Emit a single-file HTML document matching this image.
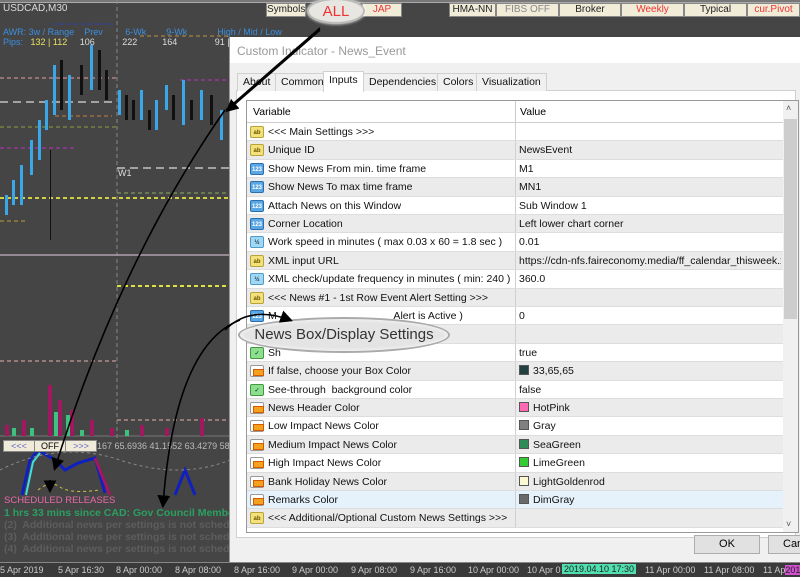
<!DOCTYPE html>
<html><head><meta charset="utf-8"><style>
*{margin:0;padding:0;box-sizing:border-box}
body{width:800px;height:577px;overflow:hidden;background:#454545;font-family:"Liberation Sans",sans-serif;position:relative}
.abs{position:absolute}
.tb{position:absolute;top:3px;height:14px;background:#f0ecd8;border:1px solid #888;font-size:10px;line-height:12px;text-align:center;color:#222}
.dlg{position:absolute;left:229px;top:37px;width:571px;height:525px;background:#f0f0f0;border-left:1px solid #999}
.row{position:absolute;left:0;width:536px;height:18.4px;font-size:10.5px;line-height:18px;color:#111;border-bottom:1px solid #ddd}
.row .n{position:absolute;left:21px;white-space:nowrap}
.row .v{position:absolute;left:272px;white-space:nowrap;overflow:hidden;width:262px}
.row .sep{position:absolute;left:268px;top:0;bottom:0;border-left:1px solid #d0d0d0}
.ic{position:absolute;left:3px;top:3px;width:14px;height:12px;border-radius:2px;font-size:6px;line-height:12px;text-align:center;font-weight:bold}
.ab{background:#f3e27a;border:1px solid #b9a23a;color:#6a5300}
.n1{background:#5aa7e3;border:1px solid #2c6fae;color:#fff}
.hf{background:#9fd8f3;border:1px solid #4f9cc8;color:#235}
.bo{background:#8fdd8f;border:1px solid #3d9a3d;color:#063}
.co{background:#fff;border:1px solid #999}
.co:after{content:"";position:absolute;left:2px;top:3px;width:9px;height:5px;background:#f4a21d;border:1px solid #d25b00}
.sw{display:inline-block;width:10px;height:10px;vertical-align:-1px;margin-right:4px;border:1px solid #555}
.tab{position:absolute;top:36px;height:18px;font-size:10.5px;line-height:17px;padding:0 5px;border:1px solid #d0d0d0;border-bottom:none;background:#f0f0f0;color:#111}
.ax{position:absolute;top:565px;font-size:9px;color:#ccc;white-space:nowrap}
.gt{position:absolute;left:4px;font-size:10.5px;font-weight:bold;white-space:nowrap}
</style></head><body>
<!-- top strip -->
<div class="abs" style="left:0;top:0;width:800px;height:3px;background:#777"></div>
<div class="abs" style="left:0;top:2px;width:800px;height:1px;background:#aaa"></div>
<div class="tb" style="left:266px;width:40px">Symbols</div>
<div class="tb" style="left:362px;width:40px;color:#e33">JAP</div>
<div class="tb" style="left:449px;width:47px">HMA-NN</div>
<div class="tb" style="left:496px;width:63px;color:#888">FIBS OFF</div>
<div class="tb" style="left:559px;width:62px">Broker</div>
<div class="tb" style="left:621px;width:63px;color:#e33">Weekly</div>
<div class="tb" style="left:684px;width:63px">Typical</div>
<div class="tb" style="left:747px;width:53px;color:#e33">cur.Pivot</div>
<div class="abs" style="left:307px;top:-2px;width:58px;height:26px;border-radius:50%;background:#e8e6e0;border:2px solid #bbb;box-shadow:0 0 3px #fff;color:#e33;font-size:15px;line-height:24px;text-align:center">ALL</div>

<div class="abs" style="left:3px;top:3px;font-size:10px;color:#ddd">USDCAD,M30</div>
<div class="abs" style="left:3px;top:27px;font-size:9px;color:#3b8fe0;white-space:nowrap">AWR: 3w / Range&nbsp;&nbsp;&nbsp;&nbsp;Prev&nbsp;&nbsp;&nbsp;&nbsp;&nbsp;&nbsp;&nbsp;&nbsp;&nbsp;6-Wk&nbsp;&nbsp;&nbsp;&nbsp;&nbsp;&nbsp;&nbsp;&nbsp;9-Wk&nbsp;&nbsp;&nbsp;&nbsp;&nbsp;&nbsp;&nbsp;&nbsp;&nbsp;&nbsp;&nbsp;&nbsp;High / Mid / Low</div>
<div class="abs" style="left:3px;top:37px;font-size:9px;color:#3b8fe0;white-space:nowrap">Pips:&nbsp;&nbsp;&nbsp;<span style="color:#e8e060">132 | 112</span>&nbsp;&nbsp;&nbsp;&nbsp;&nbsp;<span style="color:#ddd">106&nbsp;&nbsp;&nbsp;&nbsp;&nbsp;&nbsp;&nbsp;&nbsp;&nbsp;&nbsp;&nbsp;222&nbsp;&nbsp;&nbsp;&nbsp;&nbsp;&nbsp;&nbsp;&nbsp;&nbsp;&nbsp;164&nbsp;&nbsp;&nbsp;&nbsp;&nbsp;&nbsp;&nbsp;&nbsp;&nbsp;&nbsp;&nbsp;&nbsp;&nbsp;&nbsp;&nbsp;91 |</span></div>

<svg class="abs" style="left:0;top:0" width="230" height="577">
<g stroke-dasharray="4 3" stroke-width="1" fill="none">
<line x1="53" y1="24" x2="113" y2="24" stroke="#3040c0"/>
<line x1="0" y1="78" x2="117" y2="78" stroke="#e8a0a0"/>
<line x1="140" y1="36" x2="230" y2="36" stroke="#c09040"/>
<line x1="180" y1="80" x2="230" y2="80" stroke="#c030c0"/>
<line x1="0" y1="148" x2="75" y2="148" stroke="#c030c0"/>
<line x1="0" y1="127" x2="117" y2="127" stroke="#90a040"/>
<line x1="55" y1="116" x2="112" y2="116" stroke="#c08040"/>
<line x1="0" y1="198" x2="230" y2="198" stroke="#d0d040" stroke-width="2"/>
<line x1="0" y1="221" x2="25" y2="221" stroke="#c0a040"/>
<line x1="117" y1="193" x2="230" y2="193" stroke="#90b060"/>
<line x1="117" y1="286" x2="230" y2="286" stroke="#e0e040" stroke-width="2"/>
<line x1="0" y1="361" x2="117" y2="361" stroke="#e8b0b0"/>
<line x1="117" y1="420" x2="230" y2="420" stroke="#e8b0b0"/>
<line x1="117" y1="0" x2="117" y2="440" stroke="#888"/>
<line x1="117" y1="168" x2="230" y2="168" stroke="#fff" stroke-dasharray="8 5"/>
<line x1="0" y1="102" x2="117" y2="102" stroke="#fff" stroke-dasharray="8 5"/>
</g>
<line x1="0" y1="255" x2="230" y2="255" stroke="#b0a0b0" stroke-width="1.5"/>
<g fill="#3aa8e8">
<rect x="5" y="195" width="3" height="20"/><rect x="12" y="180" width="3" height="25"/><rect x="20" y="165" width="3" height="40"/><rect x="30" y="140" width="3" height="35"/><rect x="38" y="120" width="3" height="40"/><rect x="45" y="100" width="3" height="30"/><rect x="53" y="65" width="3" height="50"/><rect x="68" y="75" width="3" height="45"/><rect x="90" y="45" width="3" height="45"/><rect x="118" y="90" width="3" height="25"/><rect x="140" y="90" width="3" height="30"/><rect x="155" y="100" width="3" height="30"/><rect x="165" y="85" width="3" height="25"/><rect x="182" y="80" width="3" height="45"/><rect x="200" y="90" width="3" height="30"/><rect x="220" y="110" width="3" height="30"/>
</g>
<g fill="#111"><rect x="60" y="60" width="3" height="50"/><rect x="80" y="65" width="3" height="30"/><rect x="98" y="50" width="3" height="40"/><rect x="105" y="70" width="3" height="30"/><rect x="125" y="95" width="3" height="25"/><rect x="132" y="100" width="3" height="20"/><rect x="148" y="110" width="3" height="20"/><rect x="172" y="95" width="3" height="25"/><rect x="190" y="100" width="3" height="20"/><rect x="210" y="95" width="3" height="30"/><rect x="50" y="150" width="1" height="90"/></g>
<text x="118" y="176" fill="#ddd" font-size="9" font-family="Liberation Sans">W1</text>
<line x1="0" y1="436" x2="230" y2="436" stroke="#777"/>
<g fill="#a01860"><rect x="5" y="425" width="4" height="11"/><rect x="22" y="420" width="4" height="16"/><rect x="48" y="385" width="4" height="51"/><rect x="58" y="400" width="4" height="36"/><rect x="70" y="410" width="4" height="26"/><rect x="90" y="420" width="4" height="16"/><rect x="110" y="428" width="4" height="8"/><rect x="140" y="425" width="4" height="11"/><rect x="165" y="428" width="4" height="8"/><rect x="200" y="418" width="4" height="18"/></g>
<g fill="#40c080"><rect x="12" y="428" width="4" height="8"/><rect x="30" y="428" width="4" height="8"/><rect x="54" y="412" width="4" height="24"/><rect x="66" y="415" width="4" height="21"/><rect x="80" y="430" width="4" height="6"/><rect x="125" y="430" width="4" height="6"/></g>
<path d="M22 495 L30 460 L38 450 L55 460 L65 470 L78 463 L95 458 L105 493" stroke="#1020c0" stroke-width="3" fill="none"/>
<path d="M26 495 L33 462 L40 453" stroke="#40e0e0" stroke-width="2" fill="none"/>
<path d="M95 458 L110 495" stroke="#a01860" stroke-width="3" fill="none"/>
<path d="M175 495 L185 470 L195 495" stroke="#1020c0" stroke-width="3" fill="none"/>
<path d="M0 470 Q60 440 120 460 T230 460" stroke="#888" stroke-dasharray="3 3" fill="none"/>
<path d="M38 490 Q50 480 60 487 T100 490" stroke="#d0c040" stroke-dasharray="3 3" fill="none"/>
</svg>
<div class="abs" style="left:3px;top:440px;width:94px;height:12px;background:#efebd8;border:1px solid #888;font-size:9px;line-height:10px;display:flex"><span style="flex:1;text-align:center;color:#66c;border-right:1px solid #888">&lt;&lt;&lt;</span><span style="flex:1;text-align:center;border-right:1px solid #888">OFF</span><span style="flex:1;text-align:center;color:#66c">&gt;&gt;&gt;</span></div>
<div class="abs" style="left:97px;top:441px;font-size:9px;color:#bbb;white-space:nowrap">167 65.6936 41.1552 63.4279 58.4</div>
<div class="gt" style="top:495px;font-weight:normal;font-size:9.5px;color:#e86aa8">SCHEDULED RELEASES</div>
<div class="gt" style="top:507px;color:#2aa060">1 hrs 33 mins since CAD: Gov Council Member Lan</div>
<div class="gt" style="top:519px;color:#5d5d5d">(2)&nbsp; Additional news per settings is not scheduled</div>
<div class="gt" style="top:531px;color:#5d5d5d">(3)&nbsp; Additional news per settings is not scheduled</div>
<div class="gt" style="top:543px;color:#5d5d5d">(4)&nbsp; Additional news per settings is not scheduled</div>

<!-- bottom axis -->
<div class="abs" style="left:0;top:562px;width:800px;height:15px;background:#3a3a3a;border-top:1px solid #888"></div>
<div class="ax" style="left:0">5 Apr 2019</div><div class="ax" style="left:58px">5 Apr 16:30</div><div class="ax" style="left:116px">8 Apr 00:00</div><div class="ax" style="left:175px">8 Apr 08:00</div><div class="ax" style="left:234px">8 Apr 16:00</div><div class="ax" style="left:292px">9 Apr 00:00</div><div class="ax" style="left:351px">9 Apr 08:00</div><div class="ax" style="left:410px">9 Apr 16:00</div><div class="ax" style="left:468px">10 Apr 00:00</div><div class="ax" style="left:527px">10 Apr 0</div>
<div class="ax" style="left:562px;background:#50e0b0;color:#222;padding:0 2px;top:564px">2019.04.10 17:30</div>
<div class="ax" style="left:645px">11 Apr 00:00</div><div class="ax" style="left:704px">11 Apr 08:00</div><div class="ax" style="left:763px">11 Ap<span style="background:#d050d0;color:#222">201</span></div>

<!-- dialog -->
<div class="dlg">
<div class="abs" style="left:0;top:0;width:571px;height:26px;background:#fff"></div>
<div class="abs" style="left:7px;top:7px;font-size:12px;color:#999">Custom Indicator - News_Event</div>
<div class="abs" style="left:6px;top:53px;width:560px;height:448px;background:#fff;border:1px solid #d0d0d0"></div>
<div class="tab" style="left:7px">About</div>
<div class="tab" style="left:45px">Common</div>
<div class="tab" style="left:93px;top:34px;height:21px;background:#fff">Inputs</div>
<div class="tab" style="left:133px">Dependencies</div>
<div class="tab" style="left:207px">Colors</div>
<div class="tab" style="left:246px">Visualization</div>
<div class="abs" style="left:16px;top:63px;width:553px;height:433px;border:1px solid #999;background:#fff;overflow:hidden">
<div class="abs" style="left:0;top:0;width:536px;height:22px;border-bottom:1px solid #ccc;font-size:10.5px;line-height:22px"><span class="abs" style="left:6px">Variable</span><span class="abs" style="left:273px">Value</span><span class="abs" style="left:268px;top:0;height:22px;border-left:1px solid #ccc"></span></div>
<div class="abs" style="left:536px;top:0;width:15px;height:431px;background:#f0f0f0"></div>
<div class="abs" style="left:537px;top:18px;width:13px;height:200px;background:#cdcdcd"></div>
<div class="abs" style="left:539px;top:2px;font-size:9px;color:#555">˄</div>
<div class="abs" style="left:539px;top:418px;font-size:9px;color:#555">˅</div>
<div id="rows"></div>
</div>
<div class="abs" style="left:464px;top:498px;width:66px;height:19px;background:#e1e1e1;border:1px solid #adadad;font-size:11px;line-height:17px;text-align:center">OK</div>
<div class="abs" style="left:538px;top:498px;width:40px;height:19px;background:#e1e1e1;border:1px solid #adadad;font-size:11px;line-height:17px;padding-left:14px">Can</div>
</div>
<script>
var R=[["ab","&lt;&lt;&lt; Main Settings &gt;&gt;&gt;",""],["ab","Unique ID","NewsEvent"],["n1","Show News From min. time frame","M1"],["n1","Show News To max time frame","MN1"],["n1","Attach News on this Window","Sub Window 1"],["n1","Corner Location","Left lower chart corner"],["hf","Work speed in minutes ( max 0.03 x 60 = 1.8 sec )","0.01"],["ab","XML input URL","https://cdn-nfs.faireconomy.media/ff_calendar_thisweek.xml"],["hf","XML check/update frequency in minutes ( min: 240 )","360.0"],["ab","&lt;&lt;&lt; News #1 - 1st Row Event Alert Setting &gt;&gt;&gt;",""],["n1","M&nbsp;&nbsp;&nbsp;&nbsp;&nbsp;&nbsp;&nbsp;&nbsp;&nbsp;&nbsp;&nbsp;&nbsp;&nbsp;&nbsp;&nbsp;&nbsp;&nbsp;&nbsp;&nbsp;&nbsp;&nbsp;&nbsp;&nbsp;&nbsp;&nbsp;&nbsp;&nbsp;&nbsp;&nbsp;&nbsp;&nbsp;&nbsp;&nbsp;&nbsp;&nbsp;&nbsp;&nbsp;&nbsp;&nbsp;&nbsp;Alert is Active )","0"],["ab","",""],["bo","Sh","true"],["co","If false, choose your Box Color","<span class='sw' style='background:#214141'></span>33,65,65"],["bo","See-through&nbsp; background color","false"],["co","News Header Color","<span class='sw' style='background:#ff69b4'></span>HotPink"],["co","Low Impact News Color","<span class='sw' style='background:#808080'></span>Gray"],["co","Medium Impact News Color","<span class='sw' style='background:#2e8b57'></span>SeaGreen"],["co","High Impact News Color","<span class='sw' style='background:#32cd32'></span>LimeGreen"],["co","Bank Holiday News Color","<span class='sw' style='background:#fafad2'></span>LightGoldenrod"],["co","Remarks Color","<span class='sw' style='background:#696969'></span>DimGray"],["ab","&lt;&lt;&lt; Additional/Optional Custom News Settings &gt;&gt;&gt;",""]];
var t={ab:"ab",n1:"123",hf:"½",bo:"✓",co:""},h="";
R.forEach(function(r,i){var bg=i==20?"#e5f1fb":(i%2?"#ebebeb":"#fff");h+='<div class="row" style="top:'+(22+i*18.4)+'px;background:'+bg+'"><span class="ic '+r[0]+'">'+t[r[0]]+'</span><span class="n">'+r[1]+'</span><span class="sep"></span><span class="v">'+r[2]+'</span></div>';});
document.getElementById("rows").innerHTML=h;
</script>
<!-- bubble -->
<div class="abs" style="left:238px;top:317px;width:212px;height:36px;border-radius:50%;background:#e4e4e4;border:2px solid #aaa;box-shadow:0 0 4px #fff inset;font-size:15px;line-height:32px;text-align:center;color:#333">News Box/Display Settings</div>
<!-- arrows -->
<svg class="abs" style="left:0;top:0" width="800" height="577">
<defs><marker id="a" markerWidth="8" markerHeight="8" refX="6" refY="4" orient="auto"><path d="M0 0L8 4L0 8z" fill="#000"/></marker></defs>
<g stroke="#000" stroke-width="1.6" fill="none" marker-end="url(#a)">
<path d="M225 110 Q120 260 55 468"/>
<path d="M50 480 L50 490"/>
<path d="M320 30 L228 110"/>
<path d="M240 320 Q175 345 163 505"/>
<path d="M225 330 Q250 305 290 320"/>
</g>
<line x1="320" y1="28" x2="226" y2="110" stroke="#000" stroke-width="1.6"/>
</svg>
</body></html>
